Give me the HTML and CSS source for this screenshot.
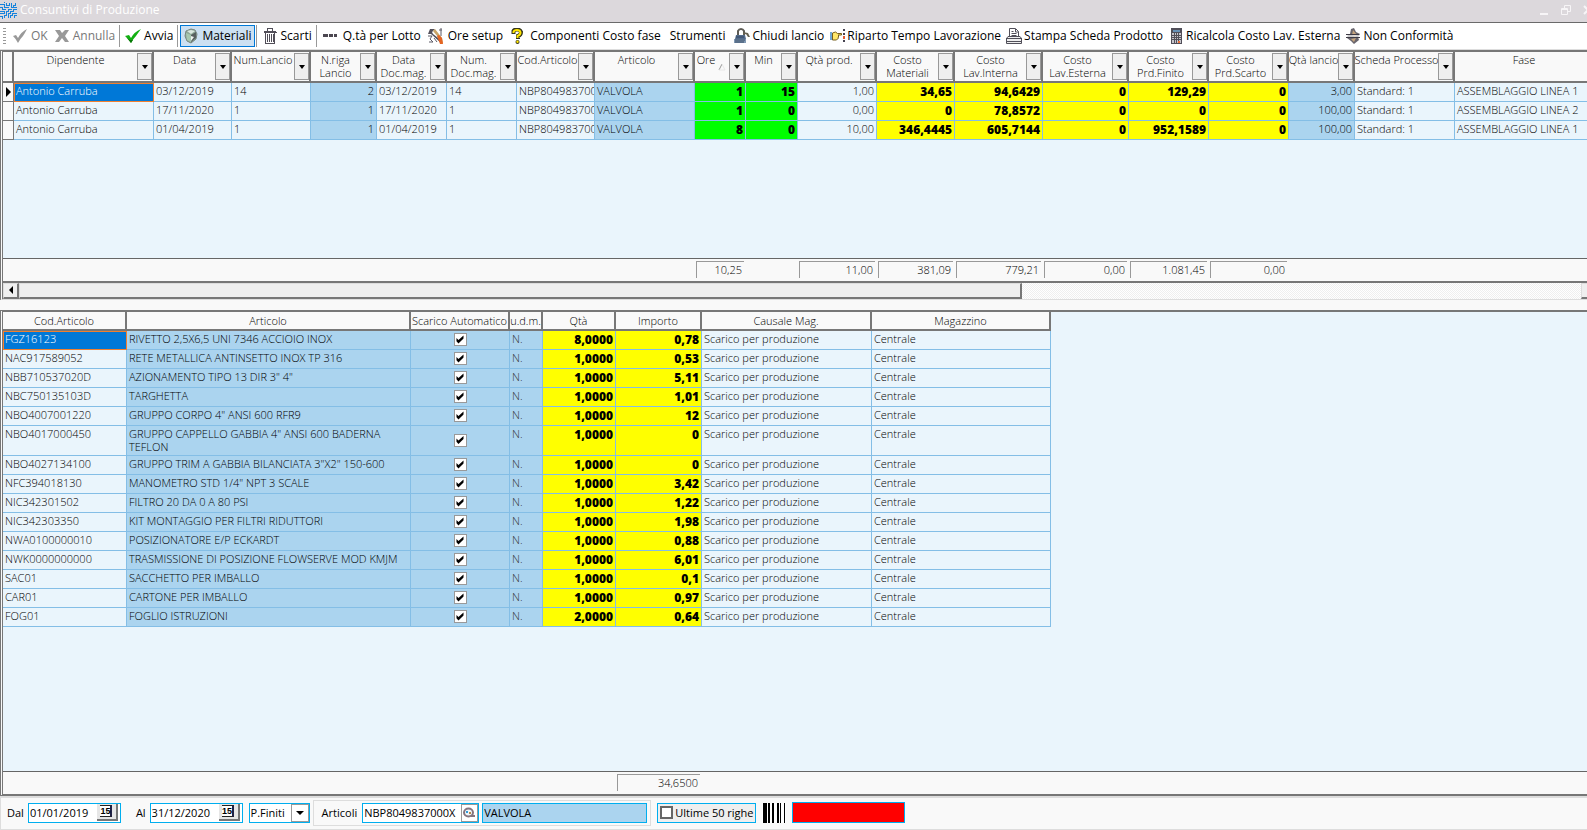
FILE: index.html
```html
<!DOCTYPE html>
<html lang="it">
<head>
<meta charset="utf-8">
<title>Consuntivi di Produzione</title>
<link rel="stylesheet" href="styles.css">
</head>
<body>
<header class="titlebar">
  <svg class="app-icon" viewBox="0 0 17 17" shape-rendering="crispEdges" fill="none" stroke="#1683dc" stroke-width="1"><path d="M0 2.500h4.500V5.500H8M6.500 1v2.500h3V1M11.500 1v4.500h2V3.500h2V1M0 5.500h2.500v2H6M0 9.500h4.500v2H0M0 14.500h2.500v2M4.500 16v-2.500h2v-4h2V7.500h3M8.500 16v-4.500h2v-2h3V7.500H17M13.500 5.500H17M10.500 16v-2.500h2v-2H17M14.500 16v-2.500H17M4.500 0v1M8.500 5v1"/></svg>
  <h1>Consuntivi di Produzione</h1>
  <div class="window-buttons">
    <button aria-label="Riduci"><svg viewBox="0 0 10 10"><path d="M1 8h8v2H1z" fill="#f7f5f7"/></svg></button>
    <button aria-label="Ripristina"><svg viewBox="0 0 10 10" fill="none" stroke="#f7f5f7"><path d="M.5 3.5h6v6h-6zM.5 4.5h6M3.500 3V.5h6v6H7"/></svg></button>
    <button aria-label="Chiudi"><svg viewBox="0 0 10 10" fill="none" stroke="#f7f5f7" stroke-width="2"><path d="M1 1l8 8M9 1L1 9"/></svg></button>
  </div>
</header>

<nav class="toolbar" aria-label="Comandi">
  <span class="grip"></span>
  <button class="tool" disabled><svg viewBox="0 0 16 16"><path d="M1 8l3-1 2 3Q9 4 15 1q-2 4-4 7-3 3-5 7Q4 11 1 8z" fill="#999"/></svg>OK</button>
  <button class="tool" disabled><svg viewBox="0 0 16 16"><path d="M1 2h5l2 3 3-3h4l-4 6 4 6h-4l-3-4-3 4H1l4-6z" fill="#999"/></svg>Annulla</button>
  <span class="sep"></span>
  <button class="tool"><svg viewBox="0 0 16 16"><path d="M0 8l4-1 2 3Q9 4 16 1q-3 4-5 7-3 3-5 7Q4 11 0 8z" fill="#12b012"/><path d="M1 9l5 6 2-3-3 0z" fill="#087808"/></svg>Avvia</button>
  <span class="sep"></span>
  <button class="tool active"><svg viewBox="0 0 16 16"><path d="M3 3l5-2 4 1 2 4-1 5-5 4-4-2-2-5z" fill="#8fa898" stroke="#77857e"/><path d="M4 3l4-1 4 1-4 3z" fill="#dce8e0"/><path d="M3 5l5 2v7l-4-2z" fill="#a8c8b0"/><path d="M8 7l5-3v6l-5 4z" fill="#59605f"/><path d="M8 8l3 1-3 4z" fill="#f0f4f0"/></svg>Materiali</button>
  <span class="sep"></span>
  <button class="tool"><svg viewBox="0 0 16 16" shape-rendering="crispEdges" fill="none" stroke="#514e58"><path d="M2 3.500h12M5.500 3V.5h5V3M3.500 5v10.500h9V5M5.500 6v8M7.500 6v8M9.500 6v8M11.500 6v8M1.500 4.500h13"/></svg>Scarti</button>
  <span class="sep"></span>
  <button class="tool wide"><svg viewBox="0 0 16 16" shape-rendering="crispEdges"><path d="M1 6h5v3H1zM7 6h4v3H7zM12 6h3v3h-3z" fill="#4b4750"/></svg>Q.tà per Lotto</button>
  <button class="tool wide"><svg viewBox="0 0 16 16"><path d="M3 1h5l-3 3 1 2 9 7-1 2L4 6 1 6z" fill="#55525c"/><path d="M6 3l5 6 3 6h2l-1-5-7-9z" fill="#c9a468"/><path d="M10 8l3 8h3l-1-6-3-3z" fill="#e46422"/><path d="M14 0v8M12 2h3M1 8h4l-2 3 3 3H2M7 10l3 4" stroke="#5d5a66" fill="none"/></svg>Ore setup</button>
  <button class="tool wide"><svg viewBox="0 0 16 16"><path d="M4.500 6V3Q5 1.500 8 1.500T12 4q0 3-3 4v3" fill="none" stroke="#36361c" stroke-width="4"/><path d="M4.500 5V4Q5 2 8 2t3.500 2.500Q11.500 7 8.500 8v2" fill="none" stroke="#ffe600" stroke-width="2"/><circle cx="8.500" cy="14" r="2" fill="#36361c"/><circle cx="8.500" cy="13.700" r="1.200" fill="#ffe600"/></svg>Componenti Costo fase</button>
  <button class="tool menu">Strumenti</button>
  <button class="tool snug"><svg viewBox="0 0 16 16"><path d="M4 7V3q1-2 3-2t3 2v4" fill="none" stroke="#5d5b55" stroke-width="2"/><path d="M2 7h9l1 4H1z" fill="#536b8c"/><path d="M0 11h12v4H0z" fill="#8199b4"/><path d="M2 9h8M1 12h10M1 14h9" stroke="#354963"/><path d="M9 4l5 1 2 4h-2l-2-3-3 1z" fill="#656151"/></svg>Chiudi lancio</button>
  <button class="tool snug"><svg viewBox="0 0 16 16"><path d="M1 4h2v8H1z" fill="#72a8d4"/><path d="M3.500 5l3-1 2 1.500h4V7H9l1 1-1 1 .5 1-2 2H3.500z" fill="#ffe86a" stroke="#765f1d"/><path d="M14 1h2v2h-2zM14 5h2v2h-2zM14 12h2v2h-2z" fill="#464250"/><path d="M14 8h2v3h-2z" fill="#e55b2f"/></svg>Riparto Tempo Lavorazione</button>
  <button class="tool snug"><svg viewBox="0 0 16 16" fill="none" stroke="#514f59"><path d="M3.500 9V.5h6l3 3V9" fill="#fff"/><path d="M9.500 1v3h3M5.500 3.500h2M5.500 5.500h5M5.500 7.500h5"/><path d="M2 8.500h12l1.500 2v5H.5v-5z" fill="#eee"/><path d="M0 10.500h16M1 13.500h14"/></svg>Stampa Scheda Prodotto</button>
  <button class="tool snug"><svg viewBox="0 0 16 16" shape-rendering="crispEdges"><path d="M3 0h11v16H3z" fill="#514f59"/><path d="M4 5h9v10H4z" fill="#c7c5cb"/><path d="M5 2h7v2H5z" fill="#6690b6"/><path d="M4 7.500h9M4 9.500h9M4 11.500h9M6.500 5v10M8.500 5v10M10.500 5v10" stroke="#514f59"/><path d="M10 13h2v2h-2z" fill="#eb6d36"/></svg>Ricalcola Costo Lav. Esterna</button>
  <button class="tool snug"><svg viewBox="0 0 16 16"><path d="M6 1l3-1 2 4 4 2-2 3 1 3-5 4-3-3-4-3 1-3 2-1z" fill="#69656d"/><path d="M8 2l4 5-2 2-3-2zM6 11l5-1-2 4z" fill="#c5a47d"/><path d="M2 8h12" stroke="#eee" stroke-width="1.500"/><path d="M1 6.500h13M1 9.500h14" stroke="#3e3b45"/></svg>Non Conformità</button>
</nav>

<main class="workspace">
  <section class="panel upper" aria-label="Consuntivi">
    <div class="grid-area">
      <table class="grid launches">
        <colgroup><col class="w11"><col class="w140"><col class="w78"><col class="w79"><col class="w66"><col class="w70"><col class="w70"><col class="w78"><col class="w100"><col class="w51"><col class="w52"><col class="w79"><col class="w78"><col class="w88"><col class="w86"><col class="w80"><col class="w80"><col class="w66"><col class="w100"><col class="w140"></colgroup>
        <thead><tr>
          <th></th>
          <th><div class="head"><span>Dipendente</span><button aria-label="Filtra Dipendente"></button></div></th>
          <th><div class="head"><span>Data</span><button aria-label="Filtra Data"></button></div></th>
          <th><div class="head"><span>Num.Lancio</span><button aria-label="Filtra Num.Lancio"></button></div></th>
          <th><div class="head"><span>N.riga<br>Lancio</span><button aria-label="Filtra N.riga Lancio"></button></div></th>
          <th><div class="head"><span>Data<br>Doc.mag.</span><button aria-label="Filtra Data Doc.mag."></button></div></th>
          <th><div class="head"><span>Num.<br>Doc.mag.</span><button aria-label="Filtra Num. Doc.mag."></button></div></th>
          <th><div class="head"><span>Cod.Articolo</span><button aria-label="Filtra Cod.Articolo"></button></div></th>
          <th><div class="head"><span>Articolo</span><button aria-label="Filtra Articolo"></button></div></th>
          <th><div class="head sorted"><span>Ore</span><svg viewBox="0 0 8 8"><path d="M1 7l3-6" stroke="#999" fill="none"/><path d="M4 1l3 6H1" stroke="#e8e8e8" fill="none"/></svg><button aria-label="Filtra Ore"></button></div></th>
          <th><div class="head"><span>Min</span><button aria-label="Filtra Min"></button></div></th>
          <th><div class="head"><span>Qtà prod.</span><button aria-label="Filtra Qtà prod."></button></div></th>
          <th><div class="head"><span>Costo<br>Materiali</span><button aria-label="Filtra Costo Materiali"></button></div></th>
          <th><div class="head"><span>Costo<br>Lav.Interna</span><button aria-label="Filtra Costo Lav.Interna"></button></div></th>
          <th><div class="head"><span>Costo<br>Lav.Esterna</span><button aria-label="Filtra Costo Lav.Esterna"></button></div></th>
          <th><div class="head"><span>Costo<br>Prd.Finito</span><button aria-label="Filtra Costo Prd.Finito"></button></div></th>
          <th><div class="head"><span>Costo<br>Prd.Scarto</span><button aria-label="Filtra Costo Prd.Scarto"></button></div></th>
          <th><div class="head"><span>Qtà lancio</span><button aria-label="Filtra Qtà lancio"></button></div></th>
          <th><div class="head"><span>Scheda Processo</span><button aria-label="Filtra Scheda Processo"></button></div></th>
          <th><div class="head"><span>Fase</span></div></th>
        </tr></thead>
        <tbody>
          <tr><td class="marker"><i class="pointer"></i></td><td class="selected">Antonio Carruba</td><td>03/12/2019</td><td>14</td><td class="blue num">2</td><td>03/12/2019</td><td>14</td><td>NBP8049837000X</td><td class="blue">VALVOLA</td><td class="green">1</td><td class="green">15</td><td class="num">1,00</td><td class="yellow">34,65</td><td class="yellow">94,6429</td><td class="yellow">0</td><td class="yellow">129,29</td><td class="yellow">0</td><td class="blue num">3,00</td><td>Standard: 1</td><td>ASSEMBLAGGIO LINEA 1</td></tr>
          <tr><td class="marker"></td><td>Antonio Carruba</td><td>17/11/2020</td><td>1</td><td class="blue num">1</td><td>17/11/2020</td><td>1</td><td>NBP8049837000X</td><td class="blue">VALVOLA</td><td class="green">1</td><td class="green">0</td><td class="num">0,00</td><td class="yellow">0</td><td class="yellow">78,8572</td><td class="yellow">0</td><td class="yellow">0</td><td class="yellow">0</td><td class="blue num">100,00</td><td>Standard: 1</td><td>ASSEMBLAGGIO LINEA 2</td></tr>
          <tr><td class="marker"></td><td>Antonio Carruba</td><td>01/04/2019</td><td>1</td><td class="blue num">1</td><td>01/04/2019</td><td>1</td><td>NBP8049837000X</td><td class="blue">VALVOLA</td><td class="green">8</td><td class="green">0</td><td class="num">10,00</td><td class="yellow">346,4445</td><td class="yellow">605,7144</td><td class="yellow">0</td><td class="yellow">952,1589</td><td class="yellow">0</td><td class="blue num">100,00</td><td>Standard: 1</td><td>ASSEMBLAGGIO LINEA 1</td></tr>
        </tbody>
      </table>
    </div>
    <div class="totals launches-totals">
      <span class="total ore">10,25</span><span class="total qta">11,00</span><span class="total">381,09</span><span class="total">779,21</span><span class="total">0,00</span><span class="total">1.081,45</span><span class="total">0,00</span>
    </div>
    <div class="scrollbar"><button class="arrow" aria-label="Scorri a sinistra"></button><div class="thumb"></div><div class="track"></div><button class="stub" aria-label="Scorri a destra"></button></div>
  </section>

  <section class="panel lower" aria-label="Materiali">
    <div class="grid-area">
      <table class="grid materials">
        <colgroup><col class="w124"><col class="w284"><col class="w99"><col class="w33"><col class="w73"><col class="w86"><col class="w170"><col class="w179"></colgroup>
        <thead><tr><th>Cod.Articolo</th><th>Articolo</th><th>Scarico Automatico</th><th>u.d.m.</th><th>Qtà</th><th>Importo</th><th>Causale Mag.</th><th>Magazzino</th></tr></thead>
        <tbody>
          <tr><td class="selected">FGZ16123</td><td class="blue">RIVETTO 2,5X6,5 UNI 7346 ACCIOIO INOX</td><td class="blue tick"><input type="checkbox" checked aria-label="Scarico FGZ16123"></td><td class="blue unit">N.</td><td class="yellow">8,0000</td><td class="yellow">0,78</td><td>Scarico per produzione</td><td>Centrale</td></tr>
          <tr><td>NAC917589052</td><td class="blue">RETE METALLICA ANTINSETTO INOX TP 316</td><td class="blue tick"><input type="checkbox" checked aria-label="Scarico NAC917589052"></td><td class="blue unit">N.</td><td class="yellow">1,0000</td><td class="yellow">0,53</td><td>Scarico per produzione</td><td>Centrale</td></tr>
          <tr><td>NBB710537020D</td><td class="blue">AZIONAMENTO TIPO 13 DIR 3" 4"</td><td class="blue tick"><input type="checkbox" checked aria-label="Scarico NBB710537020D"></td><td class="blue unit">N.</td><td class="yellow">1,0000</td><td class="yellow">5,11</td><td>Scarico per produzione</td><td>Centrale</td></tr>
          <tr><td>NBC750135103D</td><td class="blue">TARGHETTA</td><td class="blue tick"><input type="checkbox" checked aria-label="Scarico NBC750135103D"></td><td class="blue unit">N.</td><td class="yellow">1,0000</td><td class="yellow">1,01</td><td>Scarico per produzione</td><td>Centrale</td></tr>
          <tr><td>NBO4007001220</td><td class="blue">GRUPPO CORPO 4" ANSI 600 RFR9</td><td class="blue tick"><input type="checkbox" checked aria-label="Scarico NBO4007001220"></td><td class="blue unit">N.</td><td class="yellow">1,0000</td><td class="yellow">12</td><td>Scarico per produzione</td><td>Centrale</td></tr>
          <tr><td>NBO4017000450</td><td class="blue">GRUPPO CAPPELLO GABBIA 4" ANSI 600 BADERNA<br>TEFLON</td><td class="blue tick"><input type="checkbox" checked aria-label="Scarico NBO4017000450"></td><td class="blue unit">N.</td><td class="yellow">1,0000</td><td class="yellow">0</td><td>Scarico per produzione</td><td>Centrale</td></tr>
          <tr><td>NBO4027134100</td><td class="blue">GRUPPO TRIM A GABBIA BILANCIATA 3"X2" 150-600</td><td class="blue tick"><input type="checkbox" checked aria-label="Scarico NBO4027134100"></td><td class="blue unit">N.</td><td class="yellow">1,0000</td><td class="yellow">0</td><td>Scarico per produzione</td><td>Centrale</td></tr>
          <tr><td>NFC394018130</td><td class="blue">MANOMETRO STD 1/4" NPT 3 SCALE</td><td class="blue tick"><input type="checkbox" checked aria-label="Scarico NFC394018130"></td><td class="blue unit">N.</td><td class="yellow">1,0000</td><td class="yellow">3,42</td><td>Scarico per produzione</td><td>Centrale</td></tr>
          <tr><td>NIC342301502</td><td class="blue">FILTRO 20 DA 0 A 80 PSI</td><td class="blue tick"><input type="checkbox" checked aria-label="Scarico NIC342301502"></td><td class="blue unit">N.</td><td class="yellow">1,0000</td><td class="yellow">1,22</td><td>Scarico per produzione</td><td>Centrale</td></tr>
          <tr><td>NIC342303350</td><td class="blue">KIT MONTAGGIO PER FILTRI RIDUTTORI</td><td class="blue tick"><input type="checkbox" checked aria-label="Scarico NIC342303350"></td><td class="blue unit">N.</td><td class="yellow">1,0000</td><td class="yellow">1,98</td><td>Scarico per produzione</td><td>Centrale</td></tr>
          <tr><td>NWA0100000010</td><td class="blue">POSIZIONATORE E/P ECKARDT</td><td class="blue tick"><input type="checkbox" checked aria-label="Scarico NWA0100000010"></td><td class="blue unit">N.</td><td class="yellow">1,0000</td><td class="yellow">0,88</td><td>Scarico per produzione</td><td>Centrale</td></tr>
          <tr><td>NWK0000000000</td><td class="blue">TRASMISSIONE DI POSIZIONE FLOWSERVE MOD KMJM</td><td class="blue tick"><input type="checkbox" checked aria-label="Scarico NWK0000000000"></td><td class="blue unit">N.</td><td class="yellow">1,0000</td><td class="yellow">6,01</td><td>Scarico per produzione</td><td>Centrale</td></tr>
          <tr><td>SAC01</td><td class="blue">SACCHETTO PER IMBALLO</td><td class="blue tick"><input type="checkbox" checked aria-label="Scarico SAC01"></td><td class="blue unit">N.</td><td class="yellow">1,0000</td><td class="yellow">0,1</td><td>Scarico per produzione</td><td>Centrale</td></tr>
          <tr><td>CAR01</td><td class="blue">CARTONE PER IMBALLO</td><td class="blue tick"><input type="checkbox" checked aria-label="Scarico CAR01"></td><td class="blue unit">N.</td><td class="yellow">1,0000</td><td class="yellow">0,97</td><td>Scarico per produzione</td><td>Centrale</td></tr>
          <tr><td>FOG01</td><td class="blue">FOGLIO ISTRUZIONI</td><td class="blue tick"><input type="checkbox" checked aria-label="Scarico FOG01"></td><td class="blue unit">N.</td><td class="yellow">2,0000</td><td class="yellow">0,64</td><td>Scarico per produzione</td><td>Centrale</td></tr>
        </tbody>
      </table>
    </div>
    <div class="totals materials-totals"><span class="total importo">34,6500</span></div>
  </section>
</main>

<footer class="filters">
  <label for="dal">Dal</label>
  <div class="field date"><input id="dal" type="text" value="01/01/2019"><button class="calendar" aria-label="Calendario Dal"><span>15</span></button></div>
  <label for="al" class="al">Al</label>
  <div class="field date"><input id="al" type="text" value="31/12/2020"><button class="calendar" aria-label="Calendario Al"><span>15</span></button></div>
  <div class="field combo"><select aria-label="Tipo"><option>P.Finiti</option></select><span class="drop"></span></div>
  <div class="group">
    <label for="articoli">Articoli</label>
    <div class="field code"><input id="articoli" type="text" value="NBP8049837000X"><button class="lookup" aria-label="Cerca articolo"><svg viewBox="0 0 14 14"><ellipse cx="6.500" cy="6.500" rx="4.500" ry="4" fill="#eef4f8" stroke="#85757f" stroke-width="2"/><path d="M9 10h4" stroke="#85757f" stroke-width="2"/><path d="M4 5h2v2H4z" fill="#2f9cdc"/><path d="M7 6h2v2H7z" fill="#b78845"/></svg></button></div>
    <input class="field description" type="text" value="VALVOLA" aria-label="Descrizione articolo">
  </div>
  <label class="recent"><input type="checkbox">Ultime 50 righe</label>
  <svg class="barcode" viewBox="0 0 24 20" shape-rendering="crispEdges"><path d="M0 0h24v20H0z" fill="#fff"/><path d="M1 0h4v20H1zM6 0h2v20H6zM10 0h2v20h-2zM15 0h2v20h-2zM18 0h1v20h-1zM22 0h1v20h-1z"/></svg>
  <input class="alert" type="text" aria-label="Codice a barre">
</footer>
</body>
</html>
```

FILE: styles.css
```css
* { box-sizing: border-box; }

body {
  margin: 0;
  height: 100vh;
  display: flex;
  flex-direction: column;
  overflow: hidden;
  background: #f9f9f9;
  color: #000;
  font: 300 11px/13px "Open Sans", "Noto Sans", sans-serif;
}

button, input, select { font: inherit; color: inherit; margin: 0; padding: 0; border: 0; border-radius: 0; }
button { background: none; }
svg { display: block; }

/* Title bar */
.titlebar {
  flex: none;
  height: 23px;
  display: flex;
  align-items: center;
  padding-bottom: 2px;
  background: #dcd8dc;
  border-bottom: 1px solid #6a6a6a;
  overflow: hidden;
}
.app-icon { width: 17px; height: 17px; flex: none; }
.titlebar h1 {
  margin: 0 auto 0 3px;
  color: #fff;
  font: 400 12px/16px "Open Sans", sans-serif;
}
.window-buttons { display: flex; gap: 12px; margin-right: -6px; }
.window-buttons button, .window-buttons svg { width: 10px; height: 10px; }

/* Toolbar */
.toolbar {
  flex: none;
  height: 27px;
  display: flex;
  align-items: center;
  padding: 0 0 0 3px;
  background: #fff;
  border-bottom: 1px solid #ddd;
}
.grip { width: 3px; height: 16px; margin-right: 3px; background: repeating-linear-gradient(#999 0 1px, #fff 1px 3px); }
.tool {
  display: flex;
  align-items: center;
  gap: 3px;
  height: 22px;
  padding: 0 2px;
  border: 1px solid transparent;
  white-space: nowrap;
  font: 400 12px/16px "Open Sans", sans-serif;
}
.tool svg { width: 16px; height: 16px; flex: none; }
.tool:disabled { color: #777; }
.tool.active { background: #cce0f2; border-color: #0078d7; }
.tool.wide { gap: 5px; }
.tool.snug { gap: 2px; padding-right: 1px; }
.tool.menu { padding: 0 5px; }
.sep { width: 1px; height: 22px; background: #999; margin: 0 2px 0 1px; }

/* Grids */
.workspace { flex: 1; min-height: 0; display: flex; flex-direction: column; gap: 10px; }
.panel {
  min-height: 0;
  display: flex;
  flex-direction: column;
  border: 1px solid #999;
  border-top: 2px solid #777;
  border-right: 0;
  border-left: 3px double #777;
}
.upper { flex: 248; border-bottom: 1px solid #ddd; }
.lower { flex: 485; border-bottom: 2px solid #777; }
.grid-area { flex: 1; min-height: 0; overflow: hidden; background: #eaf5fc; }
.grid { table-layout: fixed; width: 0; border-collapse: separate; border-spacing: 0; }
.grid th {
  padding: 0;
  font-weight: 300;
  background: #f9f9f9;
  border-right: 2px solid #777;
  border-bottom: 2px solid #777;
  vertical-align: top;
  overflow: hidden;
  white-space: nowrap;
}
.launches th { height: 31px; }
.materials th { height: 19px; padding-top: 2px; }
.head { display: flex; height: 29px; padding: 1px 0; }
.head span { flex: 1; min-width: 0; display: flex; justify-content: center; text-align: center; }
.head button {
  flex: none;
  width: 15px;
  height: 27px;
  display: grid;
  place-items: center;
  background: #efefef;
  border: 1px solid #999;
}
.head button::before, .drop::before {
  content: "";
  border: 4px solid transparent;
  border-top-color: #000;
  border-bottom: 0;
}
.head button::before { border-width: 4px 3px 0; }
.sorted svg { width: 8px; height: 8px; margin: 10px 3px 0 1px; flex: none; }
.grid td {
  height: 19px;
  padding: 1px 2px 2px;
  vertical-align: top;
  overflow: hidden;
  white-space: nowrap;
  border-right: 1px solid #84bee6;
  border-bottom: 1px solid #84bee6;
}
.grid .num { text-align: right; }
.grid .blue { background: #abd4ef; }
.grid .unit { color: #333; }
.grid .green, .grid .yellow {
  padding-top: 2px;
  text-align: right;
  font-weight: 800;
  font-size: 12px;
}
.grid .green { background: #0f0; }
.grid .yellow { background: #ff0; }
.grid .selected { background: #0078d7; color: #fff; outline: 1px solid #f08030; outline-offset: -1px; }
.grid .marker { padding: 0; background: #f9f9f9; border-color: #777; vertical-align: middle; }
.pointer { display: block; width: 0; margin-left: 3px; border: 5px solid transparent; border-left-color: #000; border-right: 0; }
.grid .tick { padding: 0; text-align: center; vertical-align: middle; }
.tick input {
  appearance: none;
  display: block;
  width: 13px;
  height: 13px;
  margin: 0 auto;
  background: #fff;
  border: 1px solid #999;
}
.tick input:checked::before {
  content: "";
  display: block;
  width: 11px;
  height: 11px;
  background: #000;
  clip-path: polygon(18% 36%, 36% 54%, 82% 12%, 82% 40%, 36% 84%, 18% 64%);
}

.w11 { width: 11px; }
.w33 { width: 33px; }
.w51 { width: 51px; }
.w52 { width: 52px; }
.w66 { width: 66px; }
.w70 { width: 70px; }
.w73 { width: 73px; }
.w78 { width: 78px; }
.w79 { width: 79px; }
.w80 { width: 80px; }
.w86 { width: 86px; }
.w88 { width: 88px; }
.w99 { width: 99px; }
.w100 { width: 100px; }
.w124 { width: 124px; }
.w140 { width: 140px; }
.w170 { width: 170px; }
.w179 { width: 179px; }
.w284 { width: 284px; }

/* Totals under each grid */
.totals { flex: none; height: 23px; display: grid; padding: 2px 0; border-top: 1px solid #666; background: #f9f9f9; }
.launches-totals { grid-template-columns: 692px 51px 52px 79px 78px 88px 86px 80px 80px; }
.materials-totals { grid-template-columns: 613px 86px; }
.total {
  height: 17px;
  margin: 0 2px 0 1px;
  padding: 1px 2px 0;
  text-align: right;
  border-top: 1px solid #999;
  border-left: 1px solid #999;
}
.ore { grid-column: 2; }
.qta { grid-column: 4; }
.importo { grid-column: 2; }

.scrollbar { flex: none; height: 18px; display: flex; border-top: 2px solid #777; }
.arrow, .thumb, .stub { background: #efefef; border: 1px solid #ddd; border-right: 2px solid #777; border-bottom: 2px solid #777; }
.arrow { width: 16px; display: grid; place-items: center; }
.arrow::before { content: ""; border: 4px solid transparent; border-right-color: #000; border-left: 0; }
.thumb { flex: 1003; }
.track { flex: 560; background: repeating-conic-gradient(#efefef 0 25%, #fff 0 50%) 0 0 / 2px 2px; }
.stub { width: 6px; border-right: 0; }

/* Filter bar */
.filters {
  flex: none;
  height: 34px;
  display: flex;
  align-items: center;
  padding: 0 0 2px 7px;
  border-top: 2px solid #ddd;
  border-bottom: 1px solid #ddd;
  box-shadow: inset 1px 0 #ddd;
  font: 400 11px/14px "Open Sans", sans-serif;
}
.field { height: 20px; display: flex; background: #fff; border: 1px solid #00aeef; }
.field input, .field select { flex: 1; min-width: 0; width: 0; background: none; padding: 0 1px; outline: 0; appearance: none; }
.date { width: 93px; margin-left: 4px; }
.al { margin-left: 15px; }
.calendar { width: 21px; height: 17px; background: #e6e6e6; border-right: 2px solid #777; border-bottom: 2px solid #777; margin-right: 2px; display: grid; place-items: center; }
.calendar span { width: 12px; height: 12px; font: 700 9px/10px "Liberation Sans", sans-serif; background: #fff; border: 1px solid #222; border-right: 2px solid #224; border-left: 0; }
.combo { width: 61px; margin-left: 6px; }
.drop { width: 18px; border: 1px solid #999; display: grid; place-items: center; pointer-events: none; }
.group { display: flex; align-items: center; height: 26px; margin-left: 3px; padding: 0 3px 0 8px; border: 1px solid #ddd; }
.code { width: 117px; margin-left: 5px; }
.lookup { width: 17px; border: 1px solid #999; }
.lookup svg { width: 14px; height: 14px; }
.description { width: 165px; margin-left: 3px; padding: 0 1px; background: #abd4ef; }
.recent { display: flex; align-items: center; gap: 2px; width: 99px; height: 20px; margin-left: 6px; padding-left: 2px; background: #efefef; border: 1px solid #00aeef; white-space: nowrap; }
.recent input { appearance: none; flex: none; width: 13px; height: 13px; background: #fff; border: 2px solid #666; }
.barcode { width: 24px; height: 20px; margin-left: 6px; }
.alert { width: 113px; height: 21px; margin-left: 6px; background: #f00; border: 1px solid #00aeef; }
```
